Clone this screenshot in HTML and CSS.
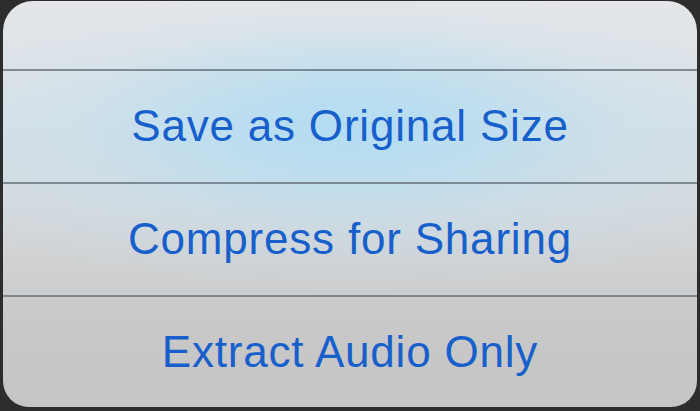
FILE: index.html
```html
<!DOCTYPE html>
<html lang="en">
<head>
  <meta charset="UTF-8" />
  <title>Save Video</title>
  <link rel="stylesheet" href="styles.css">
</head>
<body>
  <div class="sheet">
    <div class="sheet-top"></div>
    <button class="option">Save as Original Size</button>
    <button class="option">Compress for Sharing</button>
    <button class="option">Extract Audio Only</button>
  </div>
</body>
</html>
```

FILE: styles.css
```css
body {
  margin: 0;
  padding: 1px 3px 0;
  background: #2d2d2d;
  font-family: 'Liberation Sans', Arial, sans-serif;
  height: 410px;
  box-sizing: border-box;
}

.sheet {
  height: 406px;
  border-radius: 30px 30px 26px 26px;
  overflow: hidden;
  display: flex;
  flex-direction: column;
  background:
    radial-gradient(ellipse 280px 100px at 50% 125px, rgba(178, 220, 242, 0.95), rgba(178, 220, 242, 0) 100%),
    radial-gradient(ellipse 460px 150px at 50% 140px, rgba(192, 224, 240, 0.8), rgba(192, 224, 240, 0) 100%),
    linear-gradient(to bottom, #e4e6e8 0%, #e0e4e8 10%, #d8e0e6 30%, #d6dade 50%, #d0d1d2 65%, #c8c8c9 80%, #c5c5c6 100%);
}

.sheet-top {
  height: 68px;
  flex: none;
}

.option {
  flex: none;
  height: 113px;
  border: none;
  border-top: 2px solid rgba(105, 118, 128, 0.8);
  background: transparent;
  color: #1760cc;
  font-family: inherit;
  font-size: 44px;
  letter-spacing: 0.8px;
  padding: 0 0 2px;
  text-align: center;
  cursor: pointer;
}
```
